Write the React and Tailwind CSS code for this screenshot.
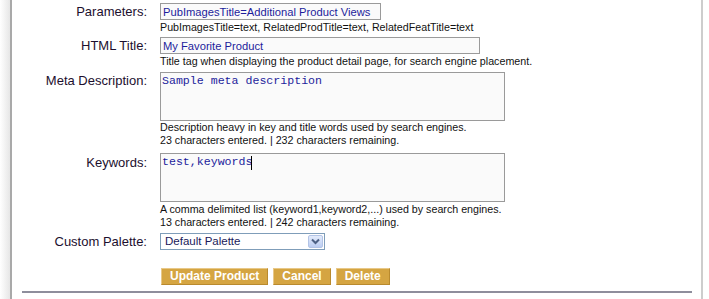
import React from 'react';

const labelCls = "text-right text-[13px] leading-[17px] text-[#1c0f2e] pr-[13px]";
const inputCls = "block h-[17px] border border-[#9a9a9a] bg-[#fafafa] px-[2px] text-[11.2px] leading-[15px] text-[#1d1d9c] outline-none";
const hintCls = "text-[10.7px] leading-[13px] text-[#111]";
const areaCls = "block h-[49px] w-[345px] resize-none border border-[#9a9a9a] bg-[#fafafa] px-[1px] pt-[1px] text-[11.6px] leading-[14px] text-[#1d1d9c] outline-none";

function Row({ label, children, className, labelClass }) {
  return (
    <div className={"flex " + (className || "")}>
      <div className={"w-[148px] shrink-0 " + labelCls + " " + (labelClass || "")}>{label}</div>
      <div className="flex flex-col">{children}</div>
    </div>
  );
}

function GoldButton({ children }) {
  return (
    <button className="h-[17px] border border-t-[#e8c888] border-l-[#e8c888] border-r-[#b98a2e] border-b-[#b98a2e] bg-[#d5a542] px-[8px] text-[12px] font-bold leading-[15px] text-white">
      {children}
    </button>
  );
}

export default function App() {
  return (
    <div className="relative h-[299px] w-[709px] bg-white" style={{ fontFamily: '"Liberation Sans", Arial, sans-serif' }}>
      <div className="flex h-full">
        <div className="w-[10px] shrink-0 bg-gradient-to-r from-white to-[#e6e6e6]" />
        <div className="flex w-[693px] shrink-0 flex-col border-l-2 border-r-2 border-l-[#a9a9a9] border-r-[#cdcdcd] pt-[3px]">
          <Row label="Parameters:">
            <input readOnly className={inputCls + " w-[221px]"} value="PubImagesTitle=Additional Product Views" />
            <div className={hintCls + " mt-[1px]"}>PubImagesTitle=text, RelatedProdTitle=text, RelatedFeatTitle=text</div>
          </Row>
          <Row label="HTML Title:" className="mt-[3px]">
            <input readOnly className={inputCls + " w-[320px]"} value="My Favorite Product" />
            <div className={hintCls + " mt-[1px]"}>Title tag when displaying the product detail page, for search engine placement.</div>
          </Row>
          <Row label="Meta Description:" className="mt-[4px]">
            <textarea readOnly className={areaCls} style={{ fontFamily: '"Liberation Mono", "Courier New", monospace' }} value="Sample meta description" />
            <div className={hintCls}>Description heavy in key and title words used by search engines.</div>
            <div className={hintCls}>23 characters entered. | 232 characters remaining.</div>
          </Row>
          <Row label="Keywords:" className="mt-[6px]" labelClass="pt-[1px]">
            <div className="relative">
              <textarea readOnly className={areaCls} style={{ fontFamily: '"Liberation Mono", "Courier New", monospace' }} value="test,keywords" />
              <span className="absolute left-[91px] top-[3px] h-[14px] w-px bg-black" />
            </div>
            <div className={hintCls + " mt-[1px]"}>A comma delimited list (keyword1,keyword2,...) used by search engines.</div>
            <div className={hintCls}>13 characters entered. | 242 characters remaining.</div>
          </Row>
          <Row label="Custom Palette:" className="mt-[4px]">
            <div className="flex h-[17px] w-[165px] items-center justify-between border border-[#7f9db9] bg-white pl-[4px] pr-[1px]">
              <span className="text-[11.5px] leading-[15px] text-[#1a1a5a]">Default Palette</span>
              <span className="flex h-[13px] w-[15px] items-center justify-center rounded-[2px] border border-[#b3c4e6] bg-gradient-to-b from-[#e3ebfb] to-[#bccdf2]">
                <svg width="9" height="7" viewBox="0 0 9 7">
                  <path d="M1 1.5 L4.5 5 L8 1.5" fill="none" stroke="#4d6185" strokeWidth="2" />
                </svg>
              </span>
            </div>
          </Row>
          <div className="mt-[18px] flex gap-[5px] pl-[149px]">
            <GoldButton>Update Product</GoldButton>
            <GoldButton>Cancel</GoldButton>
            <GoldButton>Delete</GoldButton>
          </div>
          <div className="ml-[10px] mr-[9px] mt-[6px] border-t-2 border-[#8e8e9c]" />
        </div>
      </div>
    </div>
  );
}
